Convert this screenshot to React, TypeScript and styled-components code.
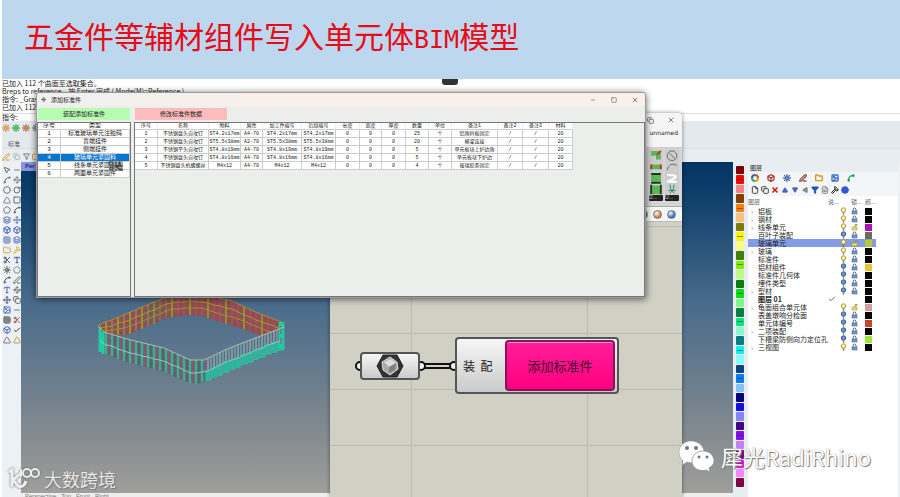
import React from "react";
import styled, { createGlobalStyle, css } from "styled-components";
import {
  Box, Check, Circle, Copy, File, FileText, Folder, Grid3x3, Hammer, Image, Minus, MousePointer2, Move, PenLine,
  Pentagon, RotateCw, Scissors, Spline, Square, Triangle, Type, Waypoints, X, Filter, Layers, Sun,
} from "lucide-react";

const Global = createGlobalStyle`
  * { box-sizing: border-box; }
  body { margin: 0; background: #fff; font-family: "Liberation Sans", "Noto Sans CJK SC", sans-serif; color: #222; }
  button, input { font: inherit; color: inherit; }
`;

const Page = styled.main`
  display: grid;
  grid-template-rows: 79px 1fr;
  min-height: 100vh;
  padding-left: 2px;
  overflow: hidden;
`;

const Banner = styled.header`
  display: flex;
  align-items: center;
  padding: 0 0 4px 22px;
  background: #bdd7ee;
`;

const Title = styled.h1`
  margin: 0;
  font: 400 30px/40px "Noto Sans CJK SC", sans-serif;
  color: #e60b16;
  white-space: nowrap;
`;

const Latin = styled.span`
  font: 25px/40px "DejaVu Sans Mono", monospace;
`;

const Workspace = styled.section`
  position: relative;
  display: grid;
  grid-template-rows: auto 41px 1fr;
  background: #e8edf1;
`;

const Commands = styled.div`
  background: #fff;
  font: 7px/8px "Noto Sans CJK SC", sans-serif;
`;

const CommandLine = styled.p`
  margin: 0;
  white-space: pre;
`;

const Prompt = styled.label`
  display: flex;
  margin-top: 2px;
  border-top: 1px solid #ddd;
  line-height: 7px;
`;

const PromptInput = styled.input`
  flex: 1;
  height: 6px;
  padding: 0;
  border: 0;
  outline: 0;
  background: transparent;
`;

const Notch = styled.div`
  position: absolute;
  left: 440px;
  top: 0;
  width: 16px;
  height: 6px;
  border-radius: 0 0 3px 3px;
  background: #333;
`;

const Ribbon = styled.div`
  display: grid;
  grid-template-rows: 14px 16px 11px;
  align-items: center;
  background: linear-gradient(#e4e9ed 0 27px, #d9dfe9 27px 28px, #e8edf1 28px);
`;

const IconRow = styled.div<{ $gap: number }>`
  display: flex;
  align-items: center;
  gap: ${(p) => p.$gap}px;
`;

const IconButton = styled.button<{ $tone?: string }>`
  display: flex;
  align-items: center;
  justify-content: center;
  width: 8px;
  height: 8px;
  padding: 0;
  border: 0;
  background: none;
  color: ${(p) => p.$tone ?? "#444"};
`;

const RibbonLabel = styled.span`
  padding-left: 6px;
  font-size: 6px;
  color: #555;
`;

const Body = styled.div`
  display: grid;
  grid-template-columns: 19px minmax(0, 1fr) 15px 152px;
  min-height: 334px;
`;

const Tools = styled.nav`
  display: grid;
  grid-template-columns: 8px 8px;
  grid-auto-rows: 8px;
  gap: 2px;
  align-content: start;
  padding: 4px 0 0 1px;
  background: #edf2f6;
  opacity: 0.85;
`;

const ViewArea = styled.section`
  display: grid;
  grid-template-rows: 1fr 4px;
  background: #eee;
`;

const Viewport = styled.div`
  background: linear-gradient(#033463 0, #12416d 12%, #496c8b 43%, #71808e 70%, #8b9092 87%, #a0a09d 100%);
`;

const ViewTab = styled.button`
  display: block;
  width: 50px;
  height: 9px;
  padding: 0 0 0 4px;
  border: 0;
  background: #8994e4;
  font: 700 6px/9px "Liberation Sans", sans-serif;
  color: #25306a;
  text-align: left;
`;

const ViewTabs = styled.div`
  padding-left: 4px;
  font: 6px/6px "Liberation Sans", sans-serif;
  overflow: hidden;
  color: #777;
`;

const Building = styled.svg`
  display: block;
  margin: 121px 0 0 71px;
`;

const Palette = styled.div`
  display: flex;
  flex-direction: column;
  gap: 1px;
  padding: 4px 4px 10px 3px;
  background: #e8edf1;
`;

const Swatch = styled.button<{ $color: string }>`
  flex: 1;
  padding: 0;
  border: 0;
  border-radius: 1px;
  background: ${(p) => p.$color};
`;

const SwatchMark = styled.span`
  display: block;
  width: 6px;
  height: 1px;
  margin: 0 auto;
  background: rgba(60, 40, 20, 0.5);
`;

const LayerPanel = styled.aside`
  display: flex;
  flex-direction: column;
  border-right: 2px solid #eef1f3;
`;

const PanelTitle = styled.h2`
  margin: 2px 0 0 2px;
  font: 6px/8px "Noto Sans CJK SC", sans-serif;
`;

const PanelTools = styled.div<{ $gap: number }>`
  display: flex;
  align-items: center;
  gap: ${(p) => p.$gap}px;
  height: 12px;
  padding-left: 3px;
  background: #f3f5f7;
`;

const LayerList = styled.div`
  flex: 1;
  background: #fff;
`;

const LayerTable = styled.table`
  width: 128px;
  border-spacing: 0;
  table-layout: fixed;
  font: 7px/8px "Noto Sans CJK SC", sans-serif;
  th, td { height: 8px; padding: 0; text-align: left; font-weight: inherit; white-space: nowrap; }
  th { height: 11px; font-weight: 400; color: #666; font-size: 6px; }
  td svg { display: block; }
`;

const LayerRow = styled.tr<{ $selected?: boolean; $current?: boolean }>`
  background: ${(p) => (p.$selected ? "#849be8" : "transparent")};
  font-weight: ${(p) => (p.$current ? 700 : 400)};
`;

const LayerName = styled.span`
  display: inline-block;
`;

const Twist = styled.span`
  display: inline-block;
  width: 10px;
  padding-left: 3px;
  color: #888;
`;

const Chip = styled.span<{ $color: string }>`
  display: block;
  width: 7px;
  height: 7px;
  background: ${(p) => p.$color};
`;

const floating = css`
  position: absolute;
  display: flex;
  flex-direction: column;
  border-radius: 3px 3px 0 0;
`;

const GraphWindow = styled.section`
  ${floating}
  left: 328px;
  top: 34px;
  bottom: 0;
  width: 352px;
  background: #f5f5f5;
  box-shadow: 0 0 4px rgba(0, 0, 0, 0.45);
`;

const WindowButtons = styled.div<{ $gap: number }>`
  display: flex;
  gap: ${(p) => p.$gap}px;
  margin-left: auto;
`;

const GraphTitle = styled.div`
  display: flex;
  height: 14px;
  padding: 3px 7px 0 0;
`;

const GraphName = styled.div`
  height: 21px;
  padding-right: 4px;
  border-bottom: 1px solid #ccc;
  font: 6px/12px "DejaVu Sans", sans-serif;
  text-align: right;
`;

const GraphRibbon = styled.div`
  display: flex;
  justify-content: flex-end;
  gap: 2px;
  height: 59px;
  padding: 1px 3px 5px;
  border-bottom: 1px solid #aaa;
  background: #d5d5d5;
`;

const GraphGroup = styled.div`
  display: flex;
  flex-direction: column;
  width: 14px;
  background: #cdcdcd;
`;

const GroupLabel = styled.span`
  height: 6px;
  margin-top: auto;
  border-radius: 1px;
  background: #222;
  color: #ddd;
  font: 5px/5px "Liberation Sans", sans-serif;
`;

const GraphDisplay = styled.div`
  display: flex;
  align-items: center;
  justify-content: flex-end;
  gap: 5px;
  height: 15px;
  padding-right: 6px;
  border-bottom: 1px solid #bbb;
`;

const Ball = styled.button<{ $color: string }>`
  width: 9px;
  height: 9px;
  padding: 0;
  border: 1px solid #777;
  border-radius: 50%;
  background: radial-gradient(circle at 35% 30%, #fff, ${(p) => p.$color} 65%);
`;

const Canvas = styled.div`
  position: relative;
  flex: 1;
  background:
    linear-gradient(90deg, transparent 81px, #babab0 81px 82px, transparent 82px 257px, #babab0 257px 258px, transparent 258px),
    repeating-linear-gradient(transparent 0 55px, #babab0 55px 56px) 0 56px,
    #d0d0c4;
`;

const capsule = css`
  position: absolute;
  border: 2px solid #555;
  border-radius: 4px;
  background: linear-gradient(#f6f6f6, #c9cbca);
`;

const GemNode = styled.div`
  ${capsule}
  left: 30px;
  top: 130px;
  width: 60px;
  height: 28px;
  display: flex;
  align-items: center;
  justify-content: center;
`;

const ButtonNode = styled.div`
  ${capsule}
  left: 125px;
  top: 115px;
  width: 164px;
  height: 57px;
  display: flex;
  align-items: center;
  padding: 1px 2px 1px 6px;
  font: 12px/16px "Noto Sans CJK SC", sans-serif;
`;

const NodeLabel = styled.span`
  width: 42px;
  white-space: nowrap;
`;

const PinkButton = styled.button`
  flex: 1;
  align-self: stretch;
  padding: 0;
  border: 2px solid #85145b;
  border-radius: 4px;
  background: linear-gradient(#ff1d99, #ff007f);
  box-shadow: inset 0 1px #ff8fcb;
  font: 13px/16px "Noto Sans CJK SC", sans-serif;
  color: #3d092b;
`;

const Wires = styled.svg`
  position: absolute;
  left: 24px;
  top: 137px;
`;

const Dialog = styled.section`
  ${floating}
  left: 34px;
  top: 13px;
  width: 610px;
  height: 206px;
  background: #eceeec;
  border: 1px solid #999;
  box-shadow: 0 1px 7px rgba(0, 0, 0, 0.6);
`;

const DialogTitle = styled.header`
  display: flex;
  align-items: center;
  gap: 5px;
  height: 13px;
  padding: 0 6px 0 4px;
  border-radius: 3px 3px 0 0;
  background: linear-gradient(90deg, #eef0ef, #f8f0e9 35%);
  font: 6px/12px "Noto Sans CJK SC", sans-serif;
`;

const Actions = styled.div`
  display: grid;
  grid-template-columns: 92px 92px;
  gap: 5px;
  height: 16px;
  padding: 2px 1px;
`;

const Action = styled.button<{ $color: string }>`
  padding: 0;
  border: 0;
  background: ${(p) => p.$color};
  font: 6px/8px "Noto Sans CJK SC", sans-serif;
`;

const Panels = styled.div`
  display: grid;
  grid-template-columns: 94px 1fr;
  gap: 3px;
  flex: 1;
`;

const Panel = styled.div`
  position: relative;
  border: 1px solid #777;
  overflow: hidden;
`;

const DataTable = styled.table<{ $wide?: boolean }>`
  width: ${(p) => (p.$wide ? "438px" : "100%")};
  border-spacing: 0;
  table-layout: fixed;
  background: #fff;
  font: 6px/6px "Liberation Mono", "Noto Sans CJK SC", monospace;
  ${(p) => p.$wide && "font-size: 5px;"}
  th, td {
    height: 8px;
    padding: 0;
    border-right: 1px solid #ccc;
    border-bottom: 1px solid #ccc;
    font-weight: 400;
    text-align: center;
    white-space: nowrap;
    overflow: hidden;
  }
  th { height: 7px; border-right-color: #eee; }
`;

const DataRow = styled.tr<{ $selected?: boolean }>`
  background: ${(p) => (p.$selected ? "#0875d1" : "#fff")};
  color: ${(p) => (p.$selected ? "#fff" : "#222")};
`;

const BusyMark = styled.svg`
  position: absolute;
  left: 70px;
  top: 38px;
`;

const Watermark = styled.div<{ $side: "left" | "right" }>`
  position: absolute;
  display: flex;
  align-items: center;
  bottom: ${(p) => (p.$side === "left" ? 6 : 25)}px;
  ${(p) => (p.$side === "left" ? "left: 5px; gap: 3px;" : "right: 29px; gap: 7px;")}
  font: ${(p) => (p.$side === "left" ? "18px/24px" : "22px/32px")} "Noto Sans CJK SC", sans-serif;
  color: ${(p) => (p.$side === "left" ? "#e8e8e8" : "#fff")};
  text-shadow: 1px 1px 1px #777, 0 0 1px #777;
  white-space: nowrap;
`;

const BrandMark = styled.svg`
  filter: drop-shadow(0 0 1px #666);
`;

const swatches = [
  "#7d0000", "#ef0808", "#f58383", "#804000", "#f68309", "#f8c184", "#7d7d05", "#f6f50c", "#fafa84", "#43800b",
  "#80ee08", "#bdfa86", "#087d10", "#08df16", "#80f889", "#08803f", "#08e482", "#86fac8", "#087d7d", "#10eeee",
  "#84faf9", "#0b437d", "#087cf0", "#86c0fa", "#07077d", "#1010e8", "#8585fa", "#3f067e", "#8010e5", "#bf80f8",
  "#7d087d", "#f20af0", "#fa84f8", "#7d0743",
];

type Layer = { name: string; open?: boolean; lit?: boolean; free?: boolean; color?: string; selected?: boolean; current?: boolean };
const layers: Layer[] = [
  { name: "铝板", open: true, lit: true },
  { name: "钢材", open: true, lit: true },
  { name: "线条单元", open: true, lit: true, free: true, color: "#ad12b6" },
  { name: "百叶子装配", color: "#696f4e" },
  { name: "玻璃单元", open: true, lit: true, free: true, color: "#b4cc31", selected: true },
  { name: "玻璃", open: true, lit: true },
  { name: "标准件", lit: true },
  { name: "铝材组件", color: "#e8c52f" },
  { name: "标准件几何体" },
  { name: "埋件类型" },
  { name: "型材", open: true },
  { name: "图层 01", current: true },
  { name: "龟面组合单元体", open: true, lit: true, free: true, color: "#d59a9a" },
  { name: "表盖墩响分检面" },
  { name: "单元体编号", color: "#ca432f" },
  { name: "二项装配", open: true },
  { name: "下槽梁防侧向力定位孔", color: "#9bea37" },
  { name: "三视图", open: true, lit: true },
];

const kinds = ["标准玻璃单元注胶码", "盲端挂件", "侧端挂件", "玻璃单元紧固料", "线条单元紧固件", "两面单元紧固件"];
const columns: [string, number][] = [
  ["序号", 23], ["名称", 51], ["物料", 32], ["属性", 22], ["加工件编号", 39], ["后续编号", 34], ["长度", 24], ["宽度", 22],
  ["厚度", 24], ["数量", 23], ["单位", 23], ["备注1", 46], ["备注2", 25], ["备注3", 26], ["材料", 24],
];
const parts = [
  ["1", "不锈钢盘头自攻钉", "ST4.2x17mm", "A4-70", "ST4.2x17mm", "ST4.2x17mm", "0", "0", "0", "25", "个", "铝角码板固定", "/", "/", "20"],
  ["2", "不锈钢盘头自攻钉", "ST5.5x38mm", "A2-70", "ST5.5x38mm", "ST5.5x38mm", "0", "0", "0", "20", "个", "横梁连接", "/", "/", "20"],
  ["3", "不锈钢平头自攻钉", "ST4.8x19mm", "A4-70", "ST4.8x19mm", "ST4.8x19mm", "0", "0", "0", "5", "个", "单元板块上护边角", "/", "/", "20"],
  ["4", "不锈钢盘头自攻钉", "ST4.8x16mm", "A4-70", "ST4.8x16mm", "ST4.8x16mm", "0", "0", "0", "5", "个", "单元板块下护边", "/", "/", "20"],
  ["5", "不锈钢盘头机螺螺丝", "M4x12", "A4-70", "M4x12", "M4x12", "0", "0", "0", "4", "个", "玻璃胶条固定", "/", "/", "20"],
];

const toolIcons = [
  MousePointer2, Minus, Spline, Waypoints, Circle, RotateCw, Triangle, Square, Pentagon, Spline, Layers, Move, Box, Box, Grid3x3,
  Layers, Folder, Hammer, Scissors, Type, Sun, Pentagon, Spline, PenLine, Type, Waypoints, Move, Copy, Image, Minus, Grid3x3, Scissors,
  Box, Check, Triangle, Triangle,
];
const toolTones = ["#555", "#666", "#555", "#777", "#666", "#555", "#777", "#555", "#666", "#444", "#465ba0", "#5368aa", "#1739b8", "#3046a4", "#6882b0", "#3857bb", "#dc9a27", "#e0a21e", "#333e61", "#2a427d", "#222", "#6b748f", "#333", "#555", "#285dae", "#666", "#347", "#555", "#2855b8", "#486aab", "#444", "#9b4242", "#304fb8", "#222", "#666", "#c08b34"];

type Pt = [number, number];
const along = (path: Pt[], x: number) => {
  const i = Math.max(1, path.findIndex((p) => p[0] >= x));
  const [a, b] = [path[i - 1], path[i]];
  return Math.round(a[1] + ((b[1] - a[1]) * (x - a[0])) / (b[0] - a[0]));
};
const backTop: Pt[] = [[6, 33], [22, 27], [62, 10], [83, 2], [110, 2], [140, 9], [166, 21], [192, 31]];
const backBase: Pt[] = [[6, 44], [35, 43], [75, 26], [98, 23], [110, 24], [148, 36], [192, 52]];
const frontTop: Pt[] = [[6, 34], [12, 40], [35, 47], [72, 56], [98, 68], [112, 68], [135, 57], [192, 35]];
const frontBase: Pt[] = [[6, 59], [35, 70], [70, 79], [95, 90], [105, 92], [118, 88], [145, 76], [192, 57]];
const polyline = (path: Pt[]) => path.map((p) => p.join(",")).join(" ");
const shape = (a: Pt[], b: Pt[]) => polyline([...a, ...[...b].reverse()]);
const ribs = Array.from({ length: 31 }, (_, i) => 8 + i * 6);
const mid = (a: Pt[], b: Pt[], r: number): Pt[] => ribs.map((x) => [x, Math.round(along(a, x) * (1 - r) + along(b, x) * r)]);

function BuildingModel() {
  return (
    <Building width="200" height="96" viewBox="0 0 200 96" aria-label="单元体模型">
      <polygon points={shape(backTop, backBase)} fill="#84544f" />
      {ribs.map((x, i) => (
        <path key={x} d={`M${x} ${along(backTop, x)}V${along(backBase, x)}`} stroke={x < 62 ? (i % 2 ? "#a28a40" : "#a36a74") : i % 3 ? "#b34468" : "#a3843a"} strokeWidth="2" />
      ))}
      {ribs.slice(8, 12).map((x) => <path key={x} d={`M${x} ${along(backTop, x)}v20`} stroke="#4d9659" />)}
      <polyline points={polyline(backTop)} fill="none" stroke="#b58937" />
      <polyline points={polyline(mid(backTop, backBase, 0.35))} fill="none" stroke="#b99129" />
      <polyline points={polyline(mid(backTop, backBase, 0.65))} fill="none" stroke="#a98b35" />
      <polygon points={shape(frontTop, frontBase)} fill="#57707f" fillOpacity=".85" />
      {ribs.map((x, i) => (
        <g key={x}>
          <path d={`M${x} ${along(frontTop, x)}V${along(frontBase, x)}`} stroke={x < 114 ? "#3bb28c" : "#a5c2cb"} strokeWidth={x < 114 ? 2 : 1} />
          {x < 110 && <path d={`M${x + 3} ${along(frontTop, x + 3)}V${along(frontBase, x + 3)}`} stroke={i % 2 ? "#90526c" : "#5f6068"} strokeWidth="2" />}
          {x > 113 && x < 188 && <path d={`M${x + 3} ${along(frontTop, x + 3)}V${along(frontBase, x + 3)}`} stroke="#8fb0bc" />}
        </g>
      ))}
      {ribs.filter((x) => x > 113).map((x) => (
        <path key={x} d={`M${x} ${Math.round((along(frontTop, x) + along(frontBase, x)) / 2)}V${along(frontBase, x)}`} stroke="#27b99b" strokeWidth="5" />
      ))}
      <path d="M8 35v25M11 40v22M188 30v26M191 30v28" stroke="#25c9a1" strokeWidth="3" />
      <path d="M189 34v8m0 4v6M114 68v10" stroke="#c1397c" />
      <polyline points={polyline(frontTop)} fill="none" stroke="#a9bcb0" />
      <polyline points={polyline(mid(frontTop, frontBase, 0.55))} fill="none" stroke="#8fc9bd" />
    </Building>
  );
}

const Bulb = ({ lit }: { lit?: boolean }) => (
  <svg width="7" height="8" viewBox="0 0 7 8">
    <circle cx="3.5" cy="3" r="2.2" fill={lit ? "#fff7a6" : "#6a99dd"} stroke={lit ? "#b99739" : "#31588e"} />
    <path d="M2.5 6h2M3 7.3h1" stroke="#66604f" />
  </svg>
);
const Lock = ({ free }: { free?: boolean }) => (
  <svg width="7" height="8" viewBox="0 0 7 8">
    <path d={free ? "M4 4V2q1-2 2 0v1" : "M2 4V2q1.5-2 3 0v2"} fill="none" stroke={free ? "#a78a35" : "#576f8e"} />
    <rect x="1" y="4" width="5" height="3" fill={free ? "#ecd765" : "#719ac9"} stroke={free ? "#9d8a3c" : "#405a80"} strokeWidth=".5" />
  </svg>
);

const ColorWheel = () => (
  <svg width="8" height="8" viewBox="0 0 8 8" fill="none" strokeWidth="2">
    <path d="M4 1a3 3 0 0 1 3 3" stroke="#d8492f" /><path d="M7 4a3 3 0 0 1-3 3" stroke="#d8a52f" />
    <path d="M4 7a3 3 0 0 1-3-3" stroke="#36a657" /><path d="M1 4a3 3 0 0 1 3-3" stroke="#395fc5" />
  </svg>
);

function LayersView() {
  const tabs: [typeof Circle, string][] = [[Box, "#a14236"], [Sun, "#2855a8"], [PenLine, "#8f5748"], [Folder, "#d49717"], [Image, "#3b70c2"], [Spline, "#1a9e64"]];
  const tools: [typeof Circle, string][] = [[File, "#444"], [Copy, "#444"], [X, "#d51d12"], [Triangle, "#4a64b8"], [Triangle, "#4a64b8"], [Triangle, "#888"], [Filter, "#2852b0"], [FileText, "#888"], [Hammer, "#222"], [Circle, "#3159d0"]];
  return (
    <LayerPanel>
      <PanelTitle>图层</PanelTitle>
      <PanelTools $gap={8}>
        <IconButton aria-label="图层面板"><ColorWheel /></IconButton>
        {tabs.map(([Icon, tone], i) => <IconButton key={i} $tone={tone} aria-label={`面板 ${i + 1}`}><Icon size={8} strokeWidth={4} /></IconButton>)}
      </PanelTools>
      <PanelTools $gap={2}>
        {tools.map(([Icon, tone], i) => (
          <IconButton key={i} $tone={tone} aria-label={`图层工具 ${i + 1}`}>
            <Icon size={i > 2 && i < 6 ? 6 : 8} strokeWidth={i === 2 ? 5 : 3} fill={(i > 2 && i < 7) || i === 9 ? "currentColor" : "none"} transform={i === 4 ? "rotate(180)" : i === 5 ? "rotate(-90)" : undefined} />
          </IconButton>
        ))}
      </PanelTools>
      <LayerList>
        <LayerTable>
          <colgroup><col width="80" /><col width="12" /><col width="11" /><col width="14" /><col width="11" /></colgroup>
          <thead><tr><th>图层</th><th>说...</th><th /><th>锁...</th><th>颜...</th></tr></thead>
          <tbody>
            {layers.map((l) => (
              <LayerRow key={l.name} $selected={l.selected} $current={l.current}>
                <td><Twist>{l.open ? "›" : ""}</Twist><LayerName>{l.name}</LayerName></td>
                <td>{l.current && <Check size={8} />}</td>
                <td>{!l.current && <Bulb lit={l.lit} />}</td>
                <td>{!l.current && <Lock free={l.free} />}</td>
                <td><Chip $color={l.color ?? "#000"} /></td>
              </LayerRow>
            ))}
          </tbody>
        </LayerTable>
      </LayerList>
    </LayerPanel>
  );
}

function Grasshopper() {
  return (
    <GraphWindow>
      <GraphTitle>
        <WindowButtons $gap={13}>
          <IconButton aria-label="最大化"><Copy size={7} /></IconButton>
          <IconButton aria-label="关闭"><X size={8} /></IconButton>
        </WindowButtons>
      </GraphTitle>
      <GraphName>unnamed</GraphName>
      <GraphRibbon>
        <GraphGroup>
          <svg width="14" height="48" viewBox="0 0 14 48">
            <path d="M2 2h10v9H7V7H2zM2 16h10v5H2zM2 27h10v7H2zM3 38h8v9H3z" fill="#5cb653" />
            <path d="m8 6 4-4M2 16v5M12 16v5" stroke="#b43f23" strokeWidth="2" />
            <path d="M2 26h10M2 35h10M2 37v10M12 37v10" stroke="#183e19" strokeWidth="2" />
          </svg>
          <GroupLabel>D...</GroupLabel>
        </GraphGroup>
        <GraphGroup>
          <svg width="14" height="48" viewBox="0 0 14 48" fill="none" stroke="#686d6c">
            <circle cx="7" cy="7" r="5" /><path d="m4 4 6 6M2 22q2-9 10-5" />
            <path d="M2 27q12 0 8 3t-8 4h10" stroke="#fff" strokeWidth="2" />
            <path d="M5 37q-1 4 4 9M9 37q1 4-4 9M3 43h8" stroke="#298b67" />
          </svg>
          <GroupLabel>U...</GroupLabel>
        </GraphGroup>
      </GraphRibbon>
      <GraphDisplay>
        <Ball $color="#338a38" aria-label="着色预览" /><Ball $color="#c77d3e" aria-label="选中预览" /><Ball $color="#336cc5" aria-label="网格预览" />
      </GraphDisplay>
      <Canvas>
        <Wires width="106" height="14" viewBox="0 0 106 14">
          <path d="M68 5h28M68 9h28" stroke="#111" strokeWidth="2" />
          {[6, 67, 100].map((x) => <circle key={x} cx={x} cy="7" r="4" fill="#f4f4ee" stroke="#111" strokeWidth="2" />)}
        </Wires>
        <GemNode>
          <svg width="28" height="24" viewBox="0 0 28 24">
            <path d="M7 1h14l6 11-6 11H7L1 12z" fill="#333" stroke="#222" />
            <path d="m14 3 7 5 1 7-8 6-7-5-1-8z" fill="#aaa" stroke="#ddd" />
            <path d="m8 8 7-3-2 8zM15 5l5 4-7 4z" fill="#ddd" /><path d="m13 13 7-4-1 7-6 3z" fill="#808080" />
          </svg>
        </GemNode>
        <ButtonNode><NodeLabel>装&nbsp; 配</NodeLabel><PinkButton>添加标准件</PinkButton></ButtonNode>
      </Canvas>
    </GraphWindow>
  );
}

function StandardParts() {
  return (
    <Dialog aria-label="添加标准件">
      <DialogTitle>
        <Waypoints size={5} />添加标准件
        <WindowButtons $gap={13}>
          <IconButton aria-label="最小化"><Minus size={6} /></IconButton>
          <IconButton aria-label="最大化"><Square size={6} /></IconButton>
          <IconButton aria-label="关闭"><X size={8} /></IconButton>
        </WindowButtons>
      </DialogTitle>
      <Actions><Action $color="#b6fcb1">装配添加标准件</Action><Action $color="#fdbcbc">修改标准件数据</Action></Actions>
      <Panels>
        <Panel>
          <DataTable>
            <colgroup><col width="23" /><col /></colgroup>
            <thead><tr><th>序号</th><th>类型</th></tr></thead>
            <tbody>{kinds.map((k, i) => <DataRow key={k} $selected={i === 3}><td>{i + 1}</td><td>{k}</td></DataRow>)}</tbody>
          </DataTable>
          <BusyMark width="16" height="11" viewBox="0 0 16 11">
            <path d="M1 0h14v10H1z" fill="#aaa" />
            <path d="M1 1h4v3H1zm6 0h1v4h3V1h1v4h3M2 6h3v3H2zm5 0h3v2h4M7 9h2m2 0h4M5 5h8" stroke="#333" fill="none" />
          </BusyMark>
        </Panel>
        <Panel>
          <DataTable $wide>
            <colgroup>{columns.map(([name, width]) => <col key={name} width={width} />)}</colgroup>
            <thead><tr>{columns.map(([name]) => <th key={name}>{name}</th>)}</tr></thead>
            <tbody>{parts.map((row) => <DataRow key={row[0]}>{row.map((cell, i) => <td key={i}>{cell}</td>)}</DataRow>)}</tbody>
          </DataTable>
        </Panel>
      </Panels>
    </Dialog>
  );
}

export default function App() {
  const ribbon = ["#d28f3a", "#29a83b", "#a96b35", "#777"];
  return (
    <>
      <Global />
      <Page>
        <Banner><Title>五金件等辅材组件写入单元体<Latin>BIM</Latin>模型</Title></Banner>
        <Workspace>
          <Commands>
            <CommandLine>已加入 112 个曲面至选取集合。</CommandLine>
            <CommandLine>Breps to reference，按 Enter 完成 ( Mode(M)=Reference )</CommandLine>
            <CommandLine>指令: _Grassh</CommandLine>
            <CommandLine>已加入 112</CommandLine>
            <Prompt>指令: <PromptInput /></Prompt>
          </Commands>
          <Ribbon>
            <IconRow $gap={2}>{ribbon.map((tone, i) => <IconButton key={i} $tone={tone} aria-label={`选取 ${i + 1}`}><Sun size={8} strokeWidth={4} /></IconButton>)}</IconRow>
            <RibbonLabel>标准</RibbonLabel>
            <IconRow $gap={2}>
              <IconButton $tone="#d39a27" aria-label="打开"><PenLine size={8} strokeWidth={3} /></IconButton>
              <IconButton $tone="#999" aria-label="复制"><Copy size={7} /></IconButton>
              <IconButton $tone="#333" aria-label="过滤"><Filter size={7} /></IconButton>
              <IconButton $tone="#d39a27" aria-label="文件夹"><Folder size={8} strokeWidth={3} /></IconButton>
            </IconRow>
          </Ribbon>
          <Body>
            <Tools>{toolIcons.map((Icon, i) => <IconButton key={i} $tone={toolTones[i]} aria-label={`工具 ${i + 1}`}><Icon size={8} strokeWidth={3} /></IconButton>)}</Tools>
            <ViewArea>
              <Viewport><ViewTab>Per</ViewTab><BuildingModel /></Viewport>
              <ViewTabs>Perspective &nbsp; Top &nbsp; Front &nbsp; Right</ViewTabs>
            </ViewArea>
            <Palette>{swatches.map((c, i) => <Swatch key={c} $color={c} aria-label={c}>{i % 3 === 1 && <SwatchMark />}</Swatch>)}</Palette>
            <LayersView />
          </Body>
          <Notch />
          <Grasshopper />
          <StandardParts />
          <Watermark $side="left">
            <BrandMark width="34" height="24" viewBox="0 0 34 24" fill="none" stroke="#eee" strokeWidth="3">
              <path d="m2 5 3-2v17M15 5l-9 8 5 6q6 2 8-5" /><g strokeWidth="2"><path d="M14 2v8" /><circle cx="20" cy="6" r="4" /><circle cx="28" cy="6" r="4" /></g>
            </BrandMark>
            大数跨境
          </Watermark>
          <Watermark $side="right">
            <svg width="36" height="32" viewBox="0 0 36 32">
              <path d="M13 1C6 1 1 6 1 12c0 4 2 7 4 9l-1 4 5-3c10 3 17-2 17-10C26 6 20 1 13 1z" fill="#fff" stroke="#999" strokeWidth=".6" />
              <path d="M25 11c-7 0-11 5-11 10 0 7 7 11 14 9l4 2-1-4c3-2 5-4 5-7 0-6-5-10-11-10z" fill="#fff" stroke="#888" strokeWidth=".7" />
              <g fill="#777"><circle cx="9" cy="8" r="2" /><circle cx="18" cy="8" r="2" /><circle cx="21" cy="17" r="1.5" /><circle cx="29" cy="17" r="1.5" /></g>
            </svg>
            犀光RadiRhino
          </Watermark>
        </Workspace>
      </Page>
    </>
  );
}
